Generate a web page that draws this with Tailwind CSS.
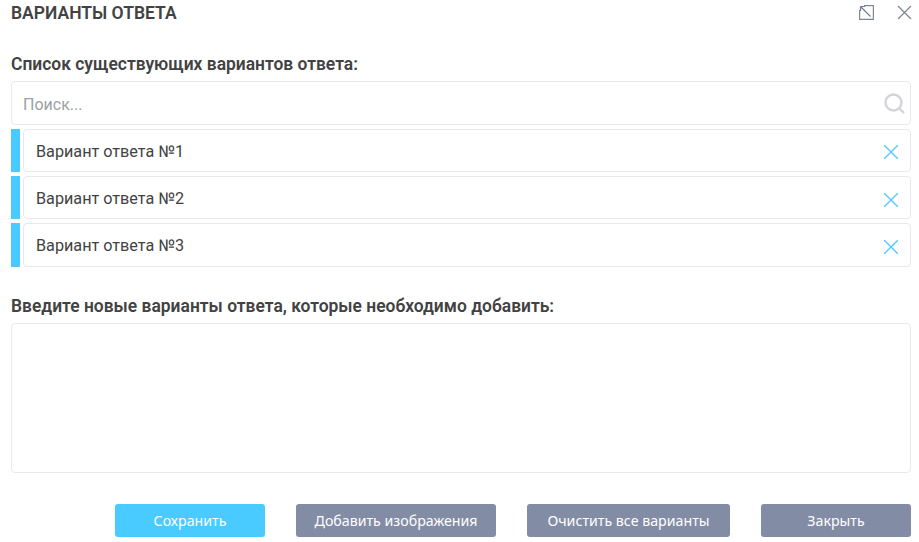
<!DOCTYPE html>
<html lang="ru">

<head>
    <meta charset="UTF-8">
    <title>Варианты ответа</title>
    <script src="https://cdn.jsdelivr.net/npm/@tailwindcss/browser@4"></script>
</head>

<body class="bg-white font-['Roboto',sans-serif] w-[919px] h-[542px] overflow-hidden">
    <!-- Header -->
    <div class="flex items-center justify-between h-[26px] pl-[11px] pr-[7px]">
        <h1 class="text-[17.5px] font-semibold text-[#424242] uppercase">Варианты ответа</h1>
        <div class="flex items-center gap-[23px] -mt-[1px]">
            <svg class="w-[15px] h-[15px]" viewBox="0 0 15 15" fill="none" stroke="#7f8791" stroke-width="1.2">
                <path d="M5 .6H14.4V14.4H.6V5" />
                <path d="M1.5 1.5L11.5 11.5M1.5 1.5H6M1.5 1.5V6" stroke="#6f7d8c" />
            </svg>
            <svg class="w-[15px] h-[15px]" viewBox="0 0 15 15" fill="none" stroke="#7f8791" stroke-width="1.3">
                <path d="M1 1L14 14M14 1L1 14" />
            </svg>
        </div>
    </div>

    <div class="ml-[11px] w-[900px]">
        <!-- Existing options -->
        <div class="mt-[28px] h-[21px] flex items-center text-[17.45px] font-semibold text-[#424242]">Список существующих вариантов ответа:</div>
        <div class="mt-[6px] flex items-center justify-between h-[44px] border border-[#e8e9ee] rounded-[4px] pl-[11px] pr-[5px]">
            <span class="text-[16px] text-[#9c9fa6] mt-[3px]">Поиск...</span>
            <svg class="w-[21px] h-[21px]" viewBox="0 0 21 21" fill="none" stroke="#d3d5da" stroke-width="2.4">
                <circle cx="9.5" cy="9.5" r="8" />
                <path d="M15.5 15.5L20 20" />
            </svg>
        </div>
        <div class="mt-[4px] flex flex-col gap-[4px]">
            <div class="flex gap-[3px] h-[43px]">
                <div class="w-[9px] bg-[#4acbff]"></div>
                <div class="flex-1 flex items-center justify-between border border-[#e8e9ee] rounded-[4px] pl-[12px] pr-[12px]">
                    <span class="text-[16.2px] text-[#424242] mt-[3px]">Вариант ответа №1</span>
                    <svg class="w-[14px] h-[14px] mt-[2px]" viewBox="0 0 14 14" fill="none" stroke="#4acbff" stroke-width="1.3"><path d="M0 0L14 14M14 0L0 14" /></svg>
                </div>
            </div>
            <div class="flex gap-[3px] h-[43px]">
                <div class="w-[9px] bg-[#4acbff]"></div>
                <div class="flex-1 flex items-center justify-between border border-[#e8e9ee] rounded-[4px] pl-[12px] pr-[12px]">
                    <span class="text-[16.2px] text-[#424242] mt-[3px]">Вариант ответа №2</span>
                    <svg class="w-[14px] h-[14px] mt-[4px]" viewBox="0 0 14 14" fill="none" stroke="#4acbff" stroke-width="1.3"><path d="M0 0L14 14M14 0L0 14" /></svg>
                </div>
            </div>
            <div class="flex gap-[3px] h-[44px]">
                <div class="w-[9px] bg-[#4acbff]"></div>
                <div class="flex-1 flex items-center justify-between border border-[#e8e9ee] rounded-[4px] pl-[12px] pr-[12px]">
                    <span class="text-[16.2px] text-[#424242] mt-[2px]">Вариант ответа №3</span>
                    <svg class="w-[14px] h-[14px] mt-[3px]" viewBox="0 0 14 14" fill="none" stroke="#4acbff" stroke-width="1.3"><path d="M0 0L14 14M14 0L0 14" /></svg>
                </div>
            </div>
        </div>

        <!-- New options -->
        <div class="mt-[29px] h-[21px] flex items-center text-[17.45px] font-semibold text-[#424242]">Введите новые варианты ответа, которые необходимо добавить:</div>
        <div class="mt-[6px] h-[150px] border border-[#e8e9ee] rounded-[4px]"></div>

        <!-- Buttons -->
        <div class="mt-[31px] flex justify-end gap-[31px] font-['Noto_Sans',sans-serif] text-[14.2px] text-white">
            <button class="w-[150px] h-[33px] rounded-[3px] bg-[#4acbff]">Сохранить</button>
            <button class="w-[200px] h-[33px] rounded-[3px] bg-[#838ca5]">Добавить изображения</button>
            <button class="w-[203px] h-[33px] rounded-[3px] bg-[#838ca5]">Очистить все варианты</button>
            <button class="w-[150px] h-[33px] rounded-[3px] bg-[#838ca5]">Закрыть</button>
        </div>
    </div>
</body>

</html>
